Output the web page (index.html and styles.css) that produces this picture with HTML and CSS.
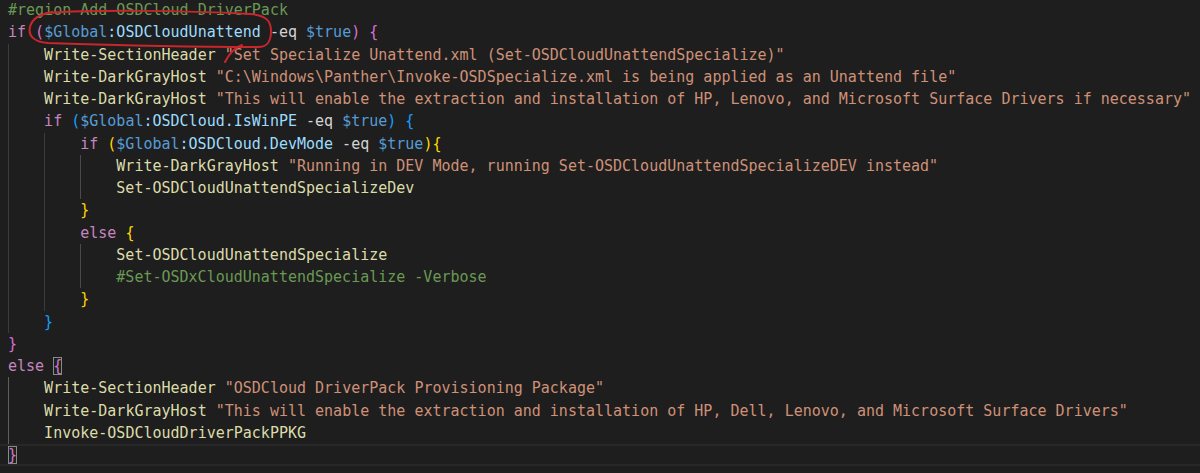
FILE: index.html
```html
<!DOCTYPE html>
<html>
<head>
<meta charset="utf-8">
<link rel="stylesheet" href="styles.css">
</head>
<body>
<div class="editor">
  <div class="line"><span class="code"><span class="cm">#region Add OSDCloud DriverPack</span></span></div>
  <div class="line"><span class="code"><span class="kw">if</span> <span class="b2">(</span><span class="sc">$Global</span><span class="var">:OSDCloudUnattend</span> -eq <span class="sc">$true</span><span class="b2">)</span> <span class="b2">{</span></span></div>
  <div class="line"><span class="ig"></span><span class="code"><span class="fn">Write-SectionHeader</span> <span class="str">"Set Specialize Unattend.xml (Set-OSDCloudUnattendSpecialize)"</span></span></div>
  <div class="line"><span class="ig"></span><span class="code"><span class="fn">Write-DarkGrayHost</span> <span class="str">"C:\Windows\Panther\Invoke-OSDSpecialize.xml is being applied as an Unattend file"</span></span></div>
  <div class="line"><span class="ig"></span><span class="code"><span class="fn">Write-DarkGrayHost</span> <span class="str">"This will enable the extraction and installation of HP, Lenovo, and Microsoft Surface Drivers if necessary"</span></span></div>
  <div class="line"><span class="ig"></span><span class="code"><span class="kw">if</span> <span class="b3">(</span><span class="sc">$Global</span><span class="var">:OSDCloud.IsWinPE</span> -eq <span class="sc">$true</span><span class="b3">)</span> <span class="b3">{</span></span></div>
  <div class="line"><span class="ig"></span><span class="ig"></span><span class="code"><span class="kw">if</span> <span class="b1">(</span><span class="sc">$Global</span><span class="var">:OSDCloud.DevMode</span> -eq <span class="sc">$true</span><span class="b1">){</span></span></div>
  <div class="line"><span class="ig"></span><span class="ig"></span><span class="ig ig-hi"></span><span class="code"><span class="fn">Write-DarkGrayHost</span> <span class="str">"Running in DEV Mode, running Set-OSDCloudUnattendSpecializeDEV instead"</span></span></div>
  <div class="line"><span class="ig"></span><span class="ig"></span><span class="ig ig-hi"></span><span class="code"><span class="fn">Set-OSDCloudUnattendSpecializeDev</span></span></div>
  <div class="line"><span class="ig"></span><span class="ig"></span><span class="code"><span class="b1">}</span></span></div>
  <div class="line"><span class="ig"></span><span class="ig"></span><span class="code"><span class="kw">else</span> <span class="b1">{</span></span></div>
  <div class="line"><span class="ig"></span><span class="ig"></span><span class="ig ig-hi"></span><span class="code"><span class="fn">Set-OSDCloudUnattendSpecialize</span></span></div>
  <div class="line"><span class="ig"></span><span class="ig"></span><span class="ig ig-hi"></span><span class="code"><span class="cm">#Set-OSDxCloudUnattendSpecialize -Verbose</span></span></div>
  <div class="line"><span class="ig"></span><span class="ig"></span><span class="code"><span class="b1">}</span></span></div>
  <div class="line"><span class="ig"></span><span class="code"><span class="b3">}</span></span></div>
  <div class="line"><span class="code"><span class="b2">}</span></span></div>
  <div class="line"><span class="code"><span class="kw">else</span> <span class="b2 match">{</span></span></div>
  <div class="line"><span class="ig ig-active"></span><span class="code"><span class="fn">Write-SectionHeader</span> <span class="str">"OSDCloud DriverPack Provisioning Package"</span></span></div>
  <div class="line"><span class="ig ig-active"></span><span class="code"><span class="fn">Write-DarkGrayHost</span> <span class="str">"This will enable the extraction and installation of HP, Dell, Lenovo, and Microsoft Surface Drivers"</span></span></div>
  <div class="line"><span class="ig ig-active"></span><span class="code"><span class="fn">Invoke-OSDCloudDriverPackPPKG</span></span></div>
  <div class="line current"><span class="code"><span class="b2 match">}</span></span></div>
</div>
<svg class="annot" width="300" height="70" viewBox="0 0 300 70">
  <path d="M 46 13 C 90 10, 180 10, 250 14 C 266 15, 271 21, 271 31 C 271 41, 268 47, 258 47 C 200 47, 110 45, 48 43 C 33 42, 28 35, 30 27 C 32 19, 38 15, 52 12" fill="none" stroke="#c8262b" stroke-width="2" stroke-linecap="round"/>
  <path d="M 242 45 C 234 48, 229 54, 225 62" fill="none" stroke="#c8262b" stroke-width="2" stroke-linecap="round"/>
</svg>
</body>
</html>
```

FILE: styles.css
```css
html, body {
  margin: 0;
  padding: 0;
  background: #1e1e1e;
  overflow: hidden;
  width: 1200px;
  height: 473px;
}

body {
  position: relative;
}

.editor {
  margin-top: -1px;
  font-family: "DejaVu Sans Mono", "Liberation Mono", monospace;
  font-size: 15px;
  color: #d4d4d4;
}

.line {
  display: flex;
  align-items: stretch;
  height: 22.25px;
  line-height: 22.25px;
  padding-left: 8px;
}

.line.current {
  box-shadow: inset 0 2px 0 #282828, inset 0 -2px 0 #282828;
}

.code {
  flex: none;
  white-space: pre;
}

.ig {
  flex: none;
  display: block;
  width: 4ch;
  box-sizing: border-box;
  border-left: 1px solid #3c3c3c;
}

.ig-hi {
  border-left-color: #4a4a4a;
}

.ig-active {
  border-left-color: #5e5e5e;
}

.cm { color: #6a9955; }
.kw { color: #c586c0; }
.sc { color: #569cd6; }
.var { color: #9cdcfe; }
.fn { color: #dcdcaa; }
.str { color: #ce9178; }
.b1 { color: #ffd700; }
.b2 { color: #da70d6; }
.b3 { color: #179fff; }

.match {
  outline: 1px solid #8a8a8a;
  outline-offset: -1px;
  background: rgba(0, 100, 0, 0.1);
}

.annot {
  position: absolute;
  left: 0;
  top: 0;
  pointer-events: none;
}
```
